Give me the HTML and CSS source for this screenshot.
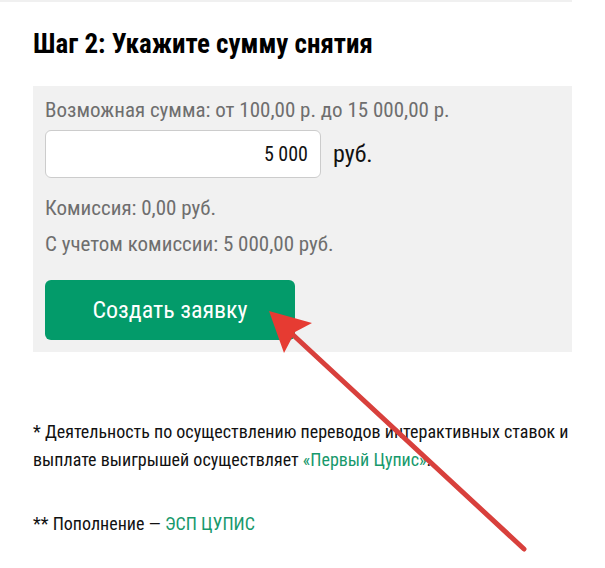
FILE: index.html
```html
<!DOCTYPE html>
<html lang="ru">
<head>
  <meta charset="UTF-8">
  <meta name="viewport" content="width=device-width, initial-scale=1.0">
  <title>Снятие средств</title>
  <link rel="stylesheet" href="styles.css">
</head>
<body>

  <main class="page">
    <h1>Шаг 2: Укажите сумму снятия</h1>

    <!-- Withdrawal Form -->
    <form class="withdraw-form">
      <label class="hint" for="amount">Возможная сумма: от 100,00 р. до 15 000,00 р.</label>
      <div class="amount-row">
        <input type="text" id="amount" name="amount" value="5 000" inputmode="numeric">
        <span class="currency">руб.</span>
      </div>
      <p class="summary">Комиссия: 0,00 руб.</p>
      <p class="summary">С учетом комиссии: 5 000,00 руб.</p>
      <div class="submit-row">
        <button type="button">Создать заявку</button>
        <!-- Pointer arrow -->
        <svg class="arrow" width="260" height="244" viewBox="0 0 260 244" aria-hidden="true">
          <path d="M22 22 L255 238" stroke="#d8403c" stroke-width="5" stroke-linecap="round"/>
          <path d="M0 0 L43 12 L26 21 L15 42 Z" fill="#e63b32"/>
        </svg>
      </div>
    </form>

    <!-- Notes -->
    <div class="notes">
      <p>* Деятельность по осуществлению переводов интерактивных ставок и выплате выигрышей осуществляет <a href="#">«Первый Цупис»</a>.</p>
      <p>** Пополнение — <a href="#">ЭСП ЦУПИС</a></p>
    </div>
  </main>

</body>
</html>
```
FILE: styles.css
```css
/* General Styling */
* {
  box-sizing: border-box;
}

body {
  font-family: "Roboto Condensed", "Liberation Sans Narrow", Roboto, sans-serif;
  background-color: #fff;
  color: #111;
  margin: 0;
}

.page {
  padding: 0 33px;
}

.page::before {
  content: "";
  display: block;
  height: 2px;
  margin-left: -33px;
  background-color: #f0f0f0;
}

h1 {
  margin: 26px 0 0;
  font-size: 27px;
  line-height: 32px;
  color: #000;
}

/* Withdrawal Form */
.withdraw-form {
  margin-top: 26px;
  padding: 12px;
  background-color: #f1f1f1;
}

.hint,
.summary {
  display: block;
  margin: 0;
  font-size: 21px;
  line-height: 24px;
  color: #6e6e6e;
}

.amount-row {
  display: flex;
  align-items: center;
  gap: 12px;
  margin: 8px 0 18px;
}

.amount-row input {
  width: 276px;
  height: 48px;
  padding: 0 12px;
  border: 1px solid #ccc;
  border-radius: 6px;
  background-color: #fff;
  font-family: inherit;
  font-size: 20px;
  color: #111;
  text-align: right;
}

.currency {
  font-size: 24px;
}

.summary + .summary {
  margin-top: 12px;
}

.submit-row {
  position: relative;
  width: 250px;
  margin-top: 24px;
}

button {
  width: 100%;
  height: 60px;
  border: none;
  border-radius: 6px;
  background-color: #039b6a;
  font-family: inherit;
  font-size: 24px;
  color: #fff;
  cursor: pointer;
}

button:hover {
  background-color: #02875c;
}

.arrow {
  position: absolute;
  top: 31px;
  left: 224px;
  fill: none;
  overflow: visible;
  pointer-events: none;
}

/* Notes */
.notes {
  margin-top: 66px;
  font-size: 18px;
  line-height: 28px;
}

.notes p {
  margin: 0 0 36px;
}

.notes a {
  color: #17996c;
  text-decoration: none;
}
```
